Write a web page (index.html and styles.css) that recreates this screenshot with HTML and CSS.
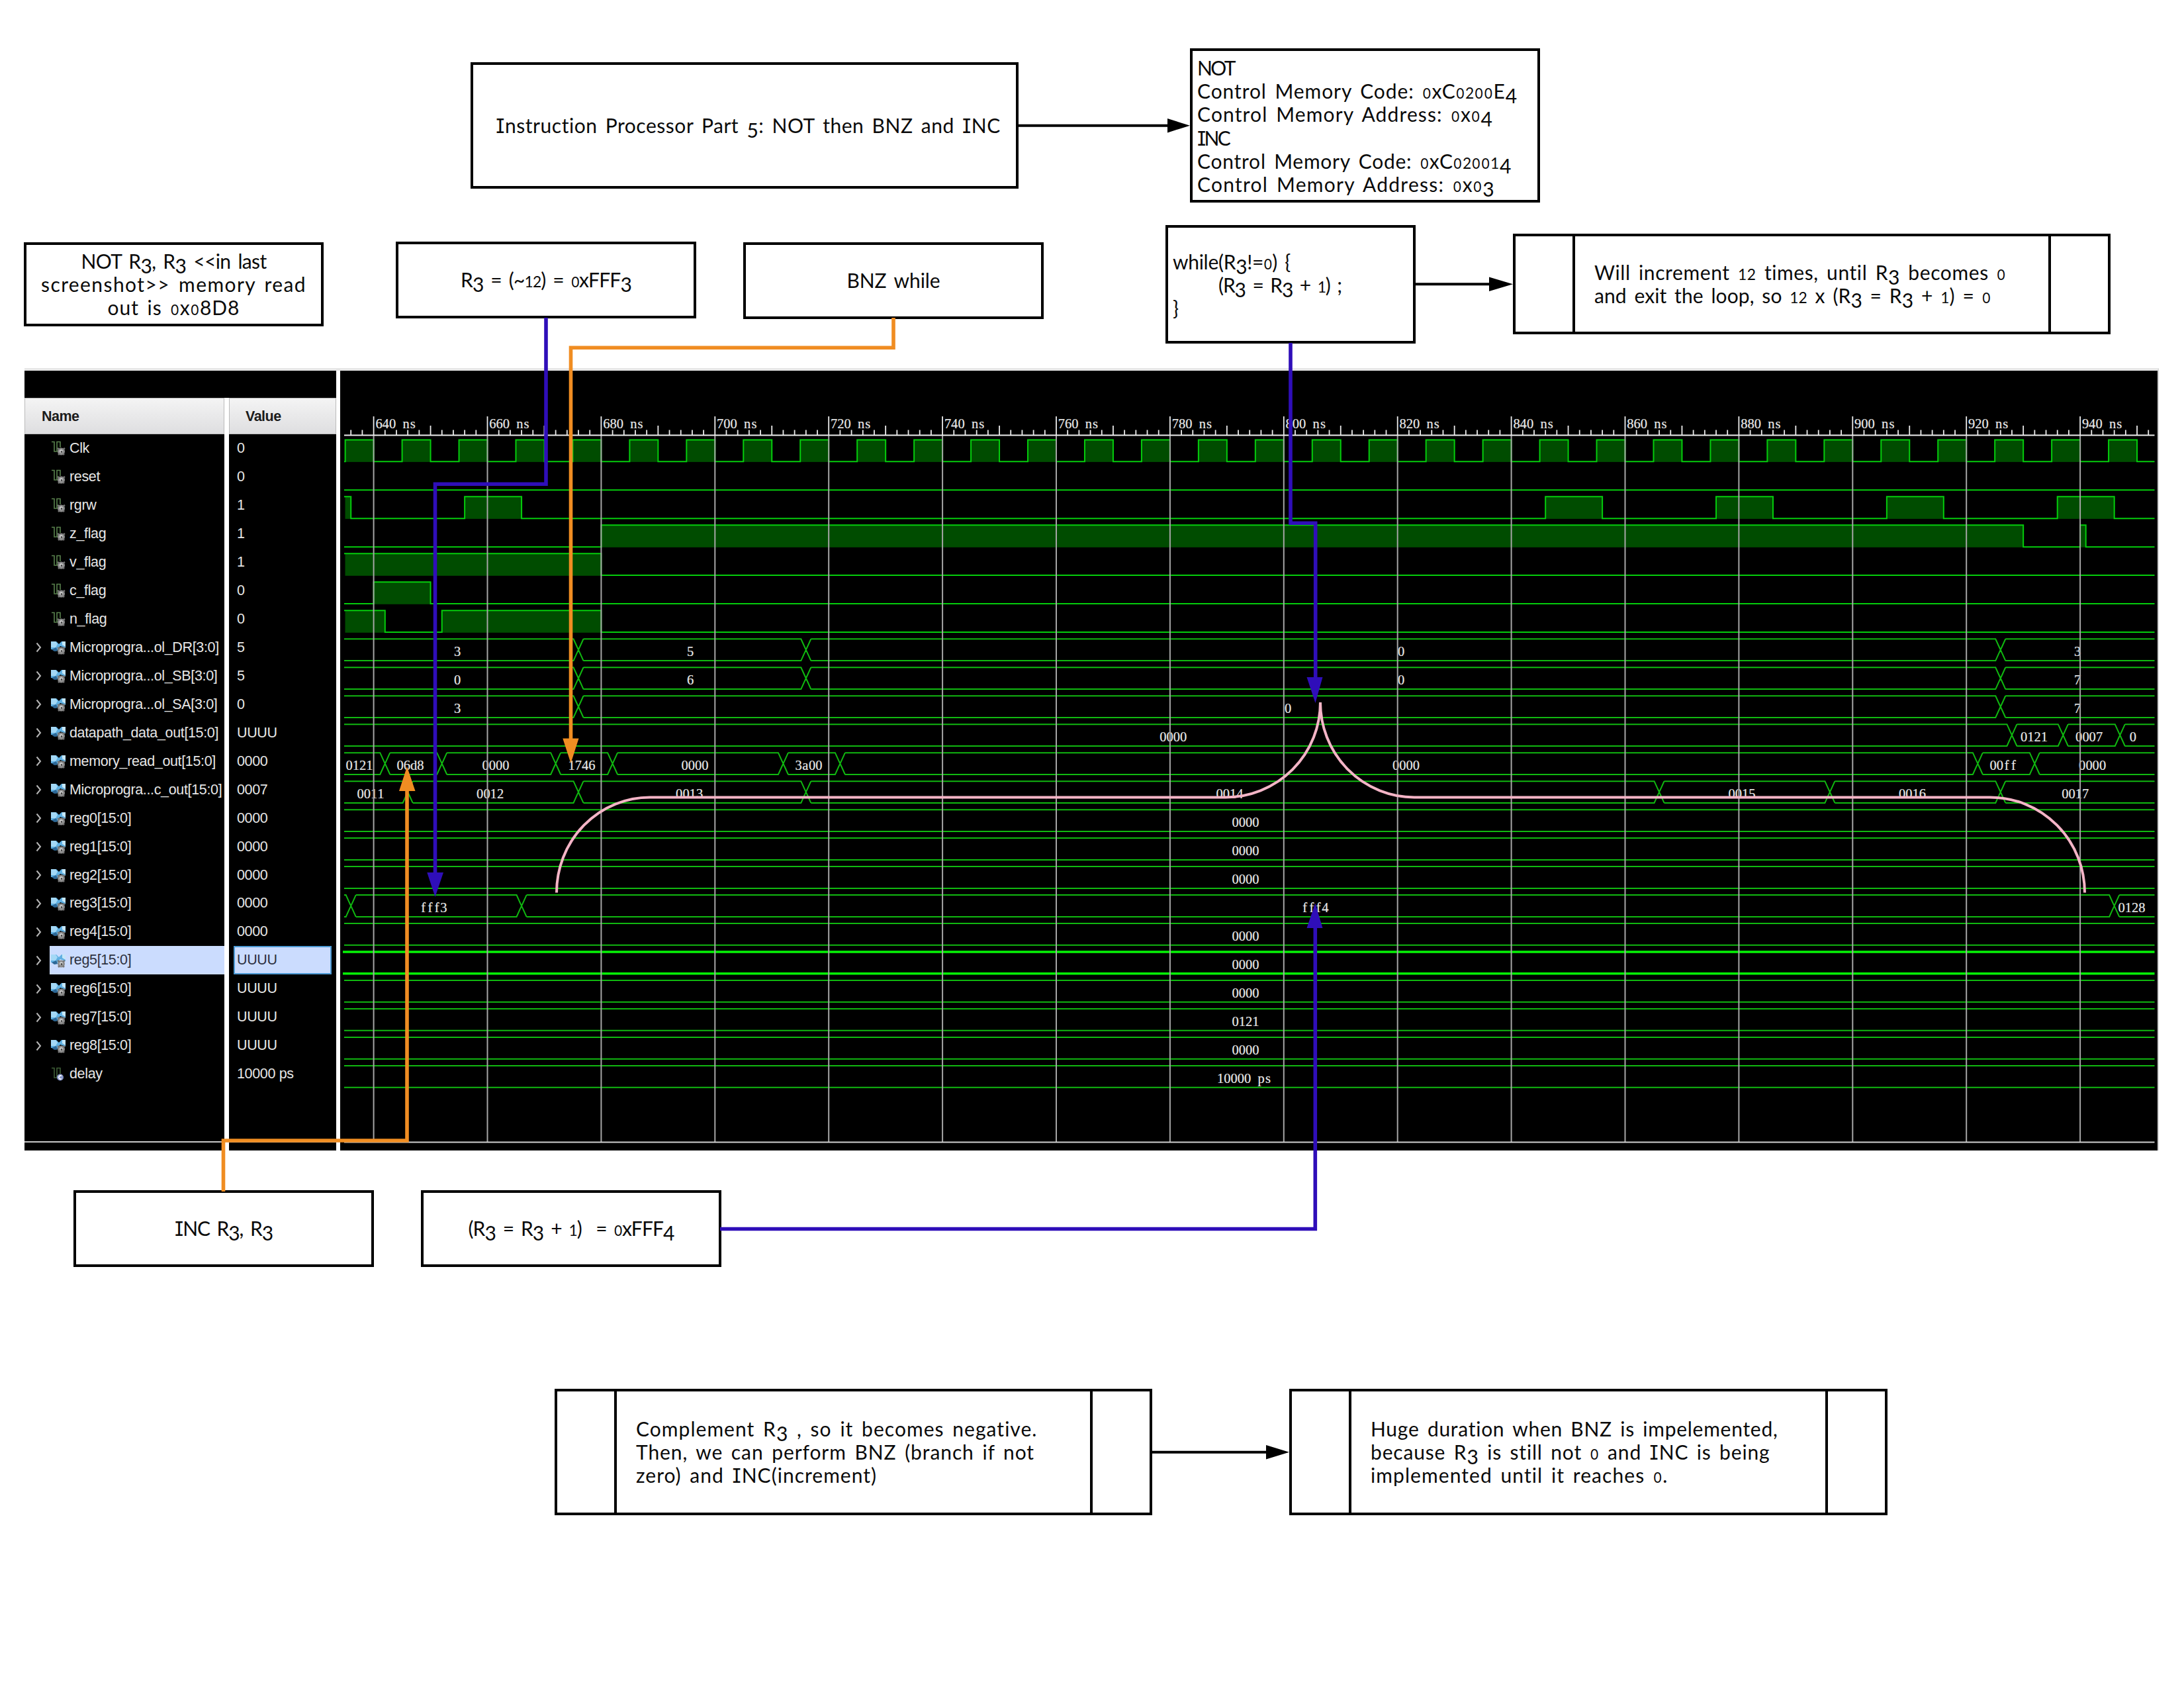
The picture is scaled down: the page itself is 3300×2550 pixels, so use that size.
FILE: index.html
```html
<!DOCTYPE html>
<html lang="en">
<head>
<meta charset="utf-8">
<title>Instruction Processor Part 5</title>
<link rel="stylesheet" href="styles.css">
</head>
<body>
<main class="canvas">
  <section class="viewer">
    <div class="names">
      <div class="head">Name</div>
      <div class="rows" id="names"></div>
    </div>
    <div class="values">
      <div class="head">Value</div>
      <div class="rows" id="values"></div>
    </div>
    <div class="waves"><svg id="wave" viewBox="514 560 2746 1178" width="2746" height="1178"></svg></div>
  </section>

  <div class="node title"><span class="line" data-w="763">Instruction Processor Part 5: NOT then BNZ and INC</span></div>
  <div class="node codes">
    <span class="line" data-w="56">NOT</span>
    <span class="line" data-w="484">Control Memory Code: 0xC0200E4</span>
    <span class="line" data-w="447">Control Memory Address: 0x04</span>
    <span class="line" data-w="48">INC</span>
    <span class="line" data-w="475">Control Memory Code: 0xC020014</span>
    <span class="line" data-w="450">Control Memory Address: 0x03</span>
  </div>
  <div class="node not">
    <span class="line" data-w="280">NOT R3, R3 &lt;&lt;in last</span>
    <span class="line" data-w="401">screenshot&gt;&gt; memory read</span>
    <span class="line" data-w="200">out is 0x08D8</span>
  </div>
  <div class="node r3"><span class="line" data-w="258">R3 = (~12) = 0xFFF3</span></div>
  <div class="node bnz"><span class="line" data-w="141">BNZ while</span></div>
  <div class="node loop">
    <span class="line" data-w="178">while(R3!=0) {</span>
    <span class="line indent" data-w="186">(R3 = R3 + 1) ;</span>
    <span class="line">}</span>
  </div>
  <div class="node sub will"><div class="body">
    <span class="line" data-w="623">Will increment 12 times, until R3 becomes 0</span>
    <span class="line" data-w="599">and exit the loop, so 12 x (R3 = R3 + 1) = 0</span>
  </div></div>
  <div class="node inc"><span class="line" data-w="148">INC R3, R3</span></div>
  <div class="node plus"><span class="line" data-w="311">(R3 = R3 + 1)&nbsp; = 0xFFF4</span></div>
  <div class="node sub comp"><div class="body">
    <span class="line" data-w="607">Complement R3 , so it becomes negative.</span>
    <span class="line" data-w="602">Then, we can perform BNZ (branch if not</span>
    <span class="line" data-w="364">zero) and INC(increment)</span>
  </div></div>
  <div class="node sub huge"><div class="body">
    <span class="line" data-w="616">Huge duration when BNZ is impelemented,</span>
    <span class="line" data-w="604">because R3 is still not 0 and INC is being</span>
    <span class="line" data-w="450">implemented until it reaches 0.</span>
  </div></div>

  <svg class="links" viewBox="0 0 3300 2550" width="3300" height="2550">
    <g class="pink"><path d="M841 1348.600A141 144.200 0 0 1 982 1204.400H1852A143 143.400 0 0 0 1995 1061A142 143.400 0 0 0 2137 1204.400H3007A143 144.200 0 0 1 3150 1348.600"/></g>
    <g class="black">
      <path d="M1538 189.700H1766M2138 429.300H2252M1741 2193.700H1915"/>
      <path class="tip" d="M1764 179L1798 189.700L1764 200.400ZM2250 418.600L2286 429.300L2250 440ZM1913 2183L1948 2193.700L1913 2204.400Z"/>
    </g>
    <g class="blue">
      <path d="M825 480V731.300H657.500V1320M1950 518V790.300H1987.700V1025M1088 1856.500H1987.300V1400"/>
      <path class="tip" d="M645.300 1318H670L657.500 1355ZM1974.500 1023H1998.500L1987.500 1062ZM1974.500 1402H1998.500L1987.300 1364.500Z"/>
    </g>
    <g class="orange">
      <path d="M1350 480V525.200H862.500V1118M337.500 1800V1723H615V1192"/>
      <path class="tip" d="M850.300 1115.500H874.500L862.500 1153ZM603 1195H627.500L615 1158Z"/>
    </g>
  </svg>
</main>
<script src="app.js"></script>
</body>
</html>
```
FILE: styles.css
```css
body { margin: 0; background: #fff; }
.canvas { position: relative; width: 3300px; height: 2550px; overflow: hidden; background: #fff; }

/* waveform viewer */
.viewer {
  position: absolute; left: 37px; top: 556px; width: 3223px; height: 1178px;
  display: grid; grid-template-columns: 302px 7px 162px 6px 2746px;
  border-top: 4px solid #e6e6e6; border-right: 2px solid #d4d4d4;
  font-family: "Liberation Sans", Arial, sans-serif; font-size: 21.500px; letter-spacing: -.35px; color: #e6e6e6;
  background: linear-gradient(#000, #000) 0 0 / 470px 41px no-repeat #fff;
}
.names { grid-column: 1; }
.values { grid-column: 3; }
.waves { grid-column: 5; background: #000; letter-spacing: 0; }
.names, .values { display: flex; flex-direction: column; height: 1178px; background: #000; }
.waves svg { display: block; }
.head {
  box-sizing: border-box; margin-top: 41px; height: 55px; flex: none; padding-left: 25px; line-height: 54px;
  font-weight: bold; font-size: 21.500px; letter-spacing: -.5px; color: #1c1c1c;
  background: linear-gradient(#f4f4f4, #dedee0); border: 1px solid #bbb;
}
.values .head { padding-left: 24px; }
.rows { flex: 1; margin-bottom: 12px; }
.names .rows { border-bottom: 2px solid #c8c8c8; }
.values .rows { border-bottom: 2px solid #c8c8c8; }
.row { display: flex; align-items: center; height: 42.980px; white-space: nowrap; }
.chev { width: 38px; flex: none; display: flex; box-sizing: border-box; padding-left: 17px; }
.cell { display: flex; align-items: center; flex: 1; height: 100%; padding-left: 2px; }
.cell svg { width: 22px; height: 24px; margin-right: 6px; flex: none; }
.values .cell { margin: 0 7px; padding-left: 4px; box-sizing: border-box; border: 1px solid transparent; }
.sel .cell { background: #cbdcfe; color: #2d3140; }
.values .sel .cell { border: 2px solid #4c9ad4; padding-left: 3px; }

.digits { font-family: "Liberation Serif", "Times New Roman", serif; font-size: 20.500px; fill: #e8e8e8; stroke: #e8e8e8; stroke-width: .2; text-anchor: middle; }
.fillw { fill: #004c00; }
.trace { fill: none; stroke: #10b810; stroke-width: 2; }
.trace.bit { stroke: #04cc0c; }
.trace.hot { stroke: #06f406; stroke-width: 3.500; }
.grid { fill: none; stroke: #a6a6a6; stroke-width: 2; }
.ruler { fill: none; stroke: #ececec; stroke-width: 1.800; }
.floor { fill: none; stroke: #d0d0d0; stroke-width: 2; }

/* diagram nodes */
.node {
  position: absolute; box-sizing: border-box; border: 4px solid #000; background: #fff; color: #0a0a0a;
  display: flex; flex-direction: column; justify-content: center; align-items: center;
  font-family: Lato, "Open Sans", sans-serif; font-size: 30px; line-height: 35.200px; word-spacing: 4px;
}
.line { display: block; height: 35.200px; white-space: pre; }
.lo { font-size: .76em; line-height: 0; }
.zero { font-family: Inter, sans-serif; font-size: .7em; line-height: 0; }
.dn { vertical-align: -.23em; line-height: 0; }
.ser { font-family: Inter, sans-serif; font-weight: 400; font-feature-settings: "cv08"; line-height: 0; }
.title { left: 711px; top: 94px; width: 828px; height: 191px; padding-left: 11px; }
.codes { left: 1798px; top: 73px; width: 529px; height: 233px; align-items: flex-start; padding: 2px 0 0 7px; }
.not { left: 36px; top: 366px; width: 453px; height: 127px; }
.r3 { left: 598px; top: 365px; width: 454px; height: 116px; }
.bnz { left: 1123px; top: 366px; width: 454px; height: 116px; }
.loop { left: 1761px; top: 340px; width: 378px; height: 179px; align-items: flex-start; padding: 2px 0 0 7px; }
.indent { margin-left: 69px; }
.sub { align-items: stretch; padding: 0 86px; }
.body { flex: 1; display: flex; flex-direction: column; justify-content: center; padding-left: 29px; border: solid #000; border-width: 0 4px; }
.will { left: 2286px; top: 353px; width: 903px; height: 152px; }
.inc { left: 111px; top: 1798px; width: 454px; height: 116px; }
.plus { left: 636px; top: 1798px; width: 454px; height: 116px; }
.comp { left: 838px; top: 2098px; width: 903px; height: 191px; }
.huge { left: 1948px; top: 2098px; width: 904px; height: 191px; }

.links { position: absolute; left: 0; top: 0; }
.links path { fill: none; }
.pink { stroke: #f4b4c6; stroke-width: 4; }
.black { stroke: #000; stroke-width: 4; }
.blue { stroke: #2f0eb9; stroke-width: 5.600; }
.orange { stroke: #f08d22; stroke-width: 5.600; }
.links .tip { stroke: none; }
.black .tip { fill: #000; }
.blue .tip { fill: #2f0eb9; }
.orange .tip { fill: #f08d22; }
```
FILE: app.js
```js
const signals = [
  ['Clk', '0'], ['reset', '0'], ['rgrw', '1'], ['z_flag', '1'], ['v_flag', '1'], ['c_flag', '0'], ['n_flag', '0'],
  ['Microprogra...ol_DR[3:0]', '5'], ['Microprogra...ol_SB[3:0]', '5'], ['Microprogra...ol_SA[3:0]', '0'],
  ['datapath_data_out[15:0]', 'UUUU'], ['memory_read_out[15:0]', '0000'], ['Microprogra...c_out[15:0]', '0007'],
  ['reg0[15:0]', '0000'], ['reg1[15:0]', '0000'], ['reg2[15:0]', '0000'], ['reg3[15:0]', '0000'], ['reg4[15:0]', '0000'],
  ['reg5[15:0]', 'UUUU'], ['reg6[15:0]', 'UUUU'], ['reg7[15:0]', 'UUUU'], ['reg8[15:0]', 'UUUU'], ['delay', '10000 ps']
];
const gear = '<circle cx="15.500" cy="17" r="5.500" fill="#8d8d8d"/><path d="M10 12l3 2M21 12l-3 2M11 22l2-2M20 22l-2-2" stroke="#777" stroke-width="2.500"/><circle cx="15.500" cy="16.500" r="2.600" fill="#c9c9c9"/><circle cx="16" cy="17.500" r="1.300" fill="#333"/>';
const bitIcon = '<svg viewBox="0 0 22 24"><path d="M1 2.500H5V17H9V2.500H14V11" fill="none" stroke="#58804c" stroke-width="1.600"/>' + gear + '</svg>';
const constIcon = '<svg viewBox="0 0 22 24"><path d="M1 2.500H5V17H9V2.500H14V11" fill="none" stroke="#3d5c36" stroke-width="1.600"/><circle cx="14" cy="16.500" r="5" fill="#8796c8"/><path d="M16 14.500A2.500 2.500 0 1 0 16 18.500" fill="none" stroke="#fff" stroke-width="1.500"/></svg>';
const busIcon = '<svg viewBox="0 0 22 24"><path d="M0 3H8L12 7L16 3H22V13L14 10L8 18L4 15H0Z" fill="#5fb0e2"/><path d="M0 3H7L10 7L7 12H0Z" fill="#a3d8f6"/><path d="M17 3H22V11L17 8Z" fill="#c5e6f8"/><path d="M1 15L8 12L10 17L5 18Z" fill="#2c6796"/>' + gear + '</svg>';
const chevron = '<svg width="9" height="16" viewBox="0 0 9 16"><path d="M1.500 1.500L7 8L1.500 14.500" fill="none" stroke="#b5b5b5" stroke-width="2"/></svg>';

let names = '', values = '';
signals.forEach(([name, value], i) => {
  const sel = i === 18 ? ' sel' : '';
  const bus = i > 6 && i < 22;
  names += `<div class="row${sel}"><span class="chev">${bus ? chevron : ''}</span><span class="cell">${bus ? busIcon : i === 22 ? constIcon : bitIcon}<span>${name}</span></span></div>`;
  values += `<div class="row${sel}"><span class="cell">${value}</span></div>`;
});
document.getElementById('names').innerHTML = names;
document.getElementById('values').innerHTML = values;

// waveforms
const X = t => 564.600 + (t - 640) * 8.595;
const low = i => 697.200 + i * 42.980;
const high = i => low(i) - 32.800;
const L = 520, R = 3255.500;
let fills = '', traces = '', digits = '';

function chars(text, cx, base) {
  const xs = [...text].map((c, k) => (cx + (k - (text.length - 1) / 2) * 10.250).toFixed(1));
  digits += `<text x="${xs.join(' ')}" y="${base}">${text}</text>`;
}
function bit(i, spans) {
  let d = `M${L} ${spans.length && spans[0][0] < 635 ? high(i) : low(i)}`;
  for (const [a, b] of spans) {
    const xa = a < 635 ? L + 1.500 : X(a);
    fills += `<rect x="${xa}" y="${high(i)}" width="${X(b) - xa}" height="33.500"/>`;
    d += a < 635 ? `H${X(b)}V${low(i)}` : `H${xa}V${high(i)}H${X(b)}V${low(i)}`;
  }
  traces += `<path class="trace bit" d="${d}H${R}"/>`;
}
function bus(i, times, labels, cls) {
  const h = high(i), l = low(i);
  let d = '', x = cls ? 518 : L;
  for (const t of times) {
    const c = X(t), e = Math.max(L, c - 7.500);
    d += `M${x} ${h}H${e}L${c - 3} ${h + 10}L${c + 3} ${l - 10}L${c + 7.500} ${l}M${x} ${l}H${e}L${c - 3} ${l - 10}L${c + 3} ${h + 10}L${c + 7.500} ${h}`;
    x = c + 7.500;
  }
  d += `M${x} ${h}H${R}M${x} ${l}H${R}`;
  traces += `<path class="trace ${cls || ''}" d="${d}"/>`;
  labels.forEach(([t, cx]) => chars(t, cx, l - 7.200));
}
const clk = [];
for (let t = 635; t < 950; t += 10) clk.push([t, t + 5]);
bit(0, clk);
bit(1, []);
bit(2, [[634, 636], [656, 666], [846, 856], [876, 886], [906, 916], [936, 946]]);
bit(3, [[680, 930], [940, 941]]);
bit(4, [[634, 680]]);
bit(5, [[640, 650]]);
bit(6, [[634, 642], [652, 680]]);
bus(7, [676, 716, 926], [['3', 691], ['5', 1043], ['0', 2117], ['3', 3139]]);
bus(8, [676, 716, 926], [['0', 691], ['6', 1043], ['0', 2117], ['7', 3139]]);
bus(9, [676, 926], [['3', 691], ['0', 1946], ['7', 3139]]);
bus(10, [928, 937, 947], [['0000', 1772.700], ['0121', 3073.500], ['0007', 3156.600], ['0', 3222.800]]);
bus(11, [642, 652, 672, 682, 712, 722, 922, 932], [['0121', 543], ['06d8', 620], ['0000', 749], ['1746', 879], ['0000', 1050], ['3a00', 1222], ['0000', 2124.500], ['00ff', 3027], ['0000', 3161.600]]);
bus(12, [646, 676, 716, 866, 896, 926], [['0011', 560], ['0012', 740.600], ['0013', 1041.600], ['0014', 1858], ['0015', 2632], ['0016', 2889.500], ['0017', 3135.700]]);
for (const i of [13, 14, 15, 17, 19, 21]) bus(i, [], [['0000', 1882]]);
bus(16, [636, 666, 946], [['fff3', 655], ['fff4', 1987], ['0128', 3221]]);
bus(20, [], [['0121', 1882]]);
bus(22, [], [['10000 ps', 1880]]);
bus(18, [], [['0000', 1882]], 'hot');

let grid = '', ruler = `M${L} 657.500H${R}`;
for (let t = 636; t <= 952; t += 2) {
  const major = t % 20 === 0;
  ruler += `M${X(t)} 657V${major ? 629 : t % 10 === 0 ? 643 : 649.500}`;
  if (major) {
    grid += `M${X(t)} 657V1725`;
    chars(t + ' ns', X(t) + 33.500, 647);
  }
}
document.getElementById('wave').innerHTML =
  `<g class="fillw">${fills}</g>${traces}<g class="digits">${digits}</g><path class="grid" d="${grid}"/><path class="ruler" d="${ruler}"/><path class="floor" d="M${L} 1725.500H${R}"/>`;

// old-style figures, then fit each caption line to its width
document.querySelectorAll('.line').forEach(el => {
  el.innerHTML = el.innerHTML.replace(/&[a-z]+;|[0-5]|I/g, m => {
    if (m[0] === '&') return m;
    const cls = m === 'I' ? 'ser' : m === '0' ? 'zero' : m < '3' ? 'lo' : 'dn';
    return `<span class="${cls}">${m}</span>`;
  });
  if (!el.dataset.w) return;
  el.style.width = 'max-content';
  const w = el.getBoundingClientRect().width;
  el.style.letterSpacing = ((el.dataset.w - w) / el.textContent.length).toFixed(3) + 'px';
});
```
